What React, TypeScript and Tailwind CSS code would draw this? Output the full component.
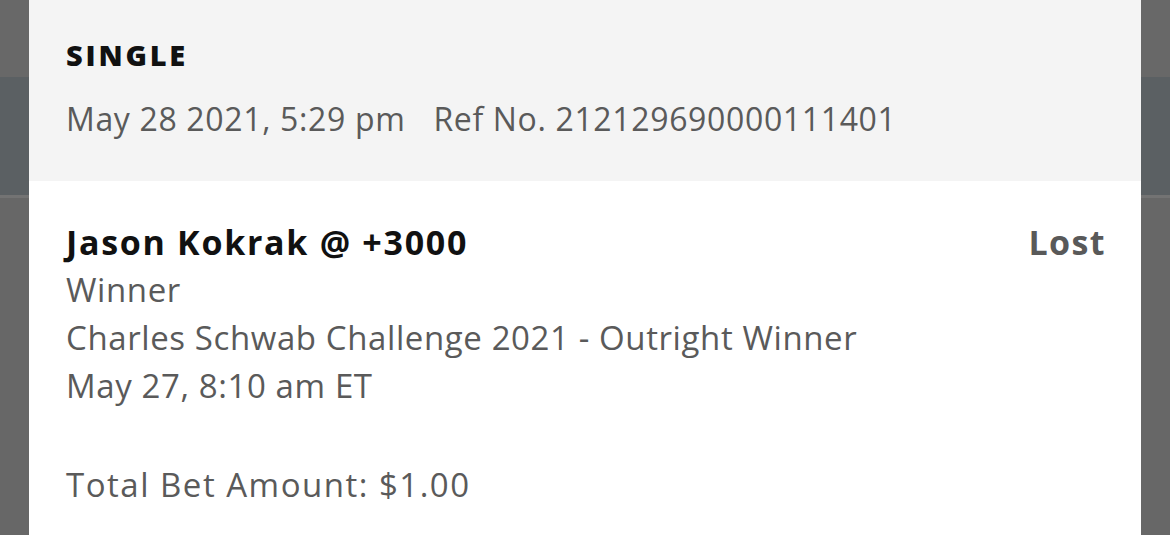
const Gutter = () => (
  <div className="flex w-[29px] shrink-0 flex-col">
    <div className="h-[77px] bg-[#686868]"></div>
    <div className="h-[118px] bg-[#5b6063]"></div>
    <div className="h-[3px] bg-[#737373]"></div>
    <div className="flex-1 bg-[#676767]"></div>
  </div>
);

const App = () => {
  return (
    <div className="flex h-[535px] w-[1170px] overflow-hidden bg-[#676767] font-['Open_Sans',sans-serif]">
      <Gutter />
      <div className="flex flex-1 flex-col bg-white">
        <div className="h-[181px] bg-[#f4f4f4] pl-[37px] pt-[35px]">
          <div className="text-[29px] font-extrabold leading-[40px] tracking-[2.8px] text-[#111]">SINGLE</div>
          <div className="mt-[22px] text-[32px] leading-[44px] tracking-[0.65px] text-[#5a5a5a]">
            May 28 2021, 5:29 pm<span className="ml-[28px]">Ref No. 212129690000111401</span>
          </div>
        </div>
        <div className="px-[37px]">
          <div className="mt-[37px] flex items-center justify-between">
            <div className="text-[34px] font-bold leading-[48px] tracking-[1.7px] text-[#111]">Jason Kokrak @ +3000</div>
            <div className="-mr-[2px] text-[34px] font-bold leading-[48px] tracking-[1.4px] text-[#595959]">Lost</div>
          </div>
          <div className="text-[33px] leading-[48px] tracking-[0.6px] text-[#5a5a5a]">
            <div>Winner</div>
            <div>Charles Schwab Challenge 2021 - Outright Winner</div>
            <div>May 27, 8:10 am ET</div>
            <div className="mt-[51px] tracking-[1.5px]">Total Bet Amount: $1.00</div>
          </div>
        </div>
      </div>
      <Gutter />
    </div>
  );
};

export default App;
